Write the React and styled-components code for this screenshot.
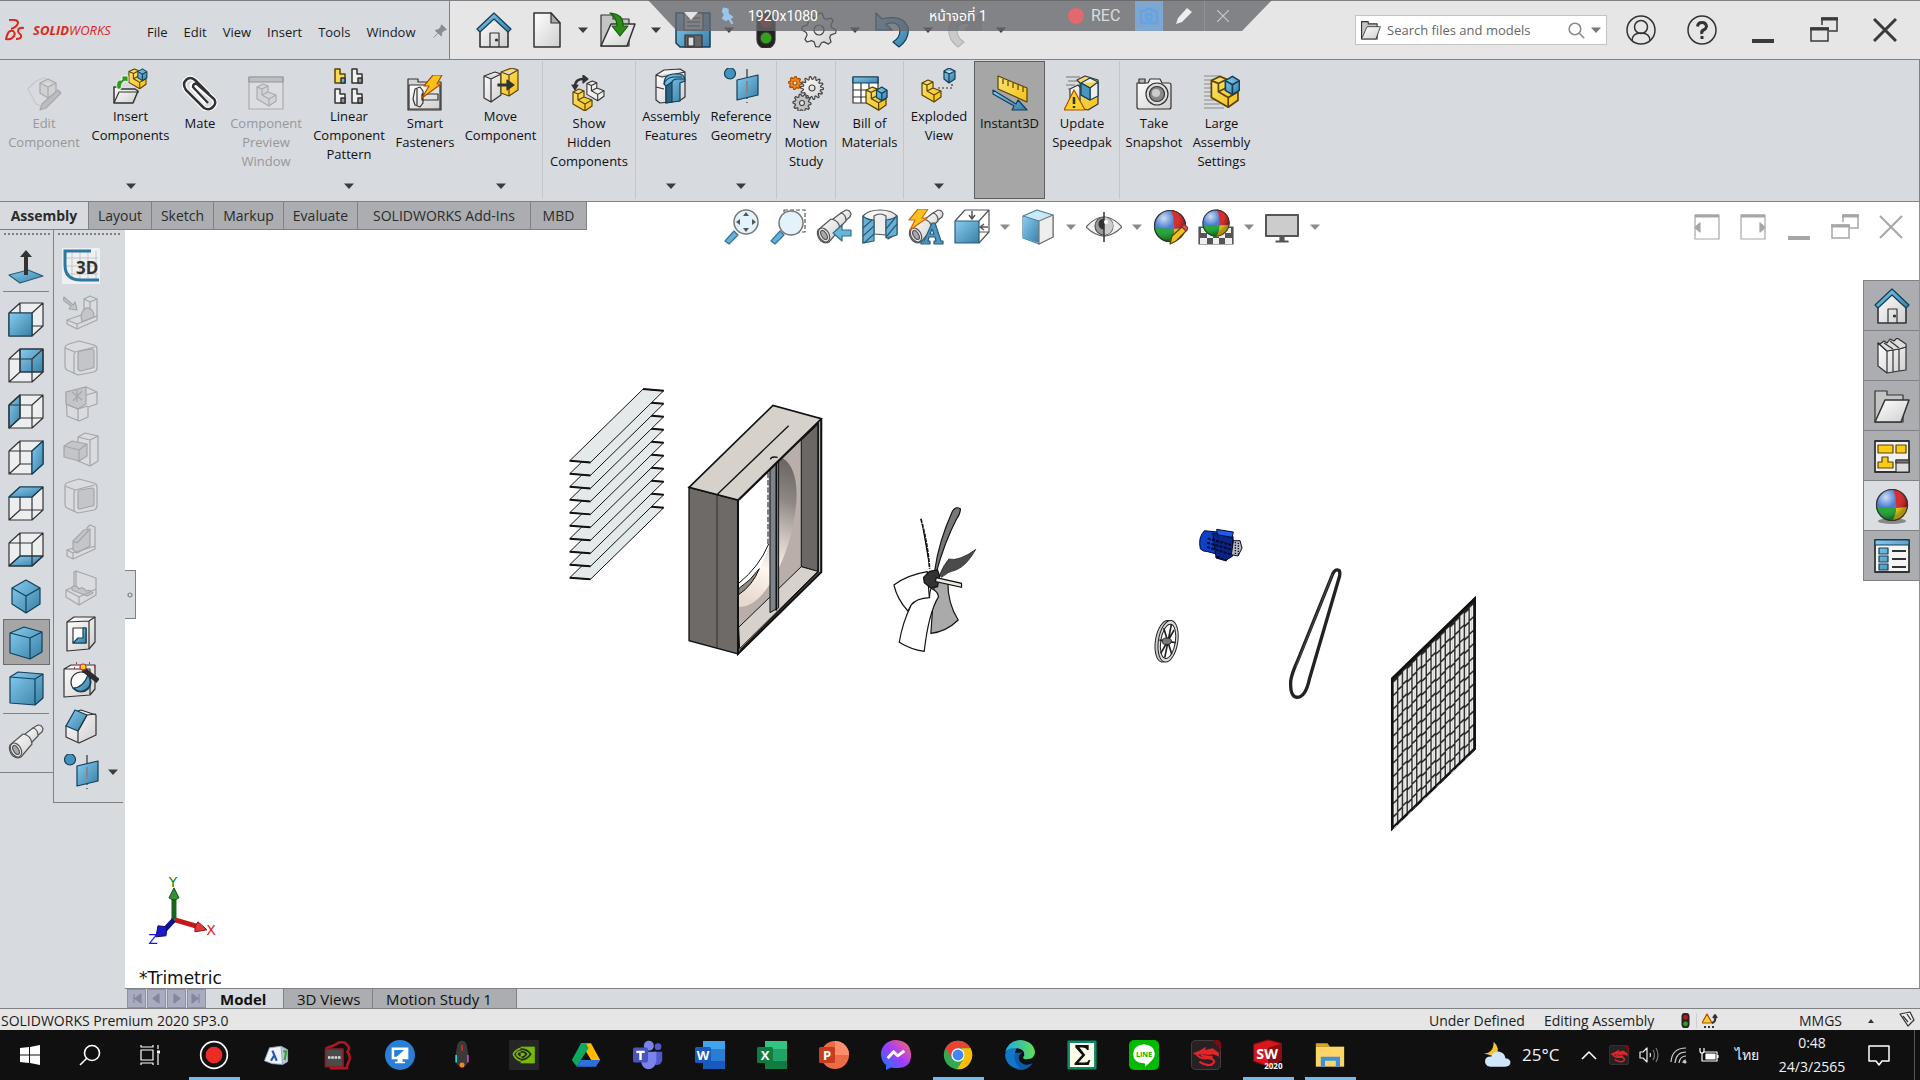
import React from 'react'
import styled, { createGlobalStyle, css } from 'styled-components'

const colors = {
    panel: '#d7dadf',
    bar: '#e6e6e6',
    tab: '#abadb0',
    line: '#808184',
    text: '#1b1b1b',
    taskbar: '#101010',
    accent: '#76b9ed',
}

const GlobalStyle = createGlobalStyle`
    * { box-sizing: border-box; }
    body {
        margin: 0;
        background: #fff;
        color: ${colors.text};
        font-family: 'Open Sans', 'Noto Sans', sans-serif;
        font-size: 13px;
    }
    button, input {
        font: inherit;
        color: inherit;
        border: 0;
        padding: 0;
        background: none;
    }
    button { cursor: pointer; }
    svg { display: block; flex: none; }
`

const Page = styled.div`
    position: relative;
    display: flex;
    flex-direction: column;
    min-height: 100vh;
`
const TitleBar = styled.header`
    display: flex;
    height: 60px;
    background: ${colors.bar};
    border-top: 1px solid ${colors.line};
    border-bottom: 1px solid ${colors.line};
`
const MenuArea = styled.div`
    display: flex;
    align-items: center;
    width: 450px;
    padding-left: 5px;
    background: ${colors.panel};
    border-right: 1px solid ${colors.line};
`
const Logo = styled.div`
    display: flex;
    align-items: center;
    gap: 8px;
    width: 142px;
    color: #da291c;
    font-style: italic;
    line-height: 20px;
`
const MenuNav = styled.nav`
    display: flex;
    align-items: center;
    gap: 16px;
    padding-top: 4px;
`
const QuickAccess = styled.div`
    display: flex;
    padding-left: 17px;
`
const Slot = styled.button`
    display: flex;
    align-items: center;
    justify-content: center;
    width: ${p => p.$w}px;
    height: ${p => p.$h || 58}px;
    ${p => p.$active && css`
        background: #a6a6a6;
        border: 1px solid #6d6d6d;
    `}
`
const SearchBox = styled.label`
    display: flex;
    align-items: center;
    gap: 6px;
    width: 252px;
    height: 30px;
    margin: 14px 19px 0 auto;
    padding: 0 5px;
    background: #fff;
    border: 1px solid #c3c3c3;
    color: #666;
`
const SearchInput = styled.input`
    flex: 1;
    min-width: 0;
    outline: none;
    &::placeholder { color: #666; opacity: 1; }
`
const WindowButtons = styled.div`
    display: flex;
    padding-right: 19px;
`
const RecorderBar = styled.div`
    position: absolute;
    top: 0;
    left: 0;
    right: 0;
    margin: auto;
    display: grid;
    grid-template-columns: 24px 40px 152px 116px 72px 47px 28px 42px 36px;
    align-items: center;
    width: 624px;
    height: 31px;
    padding-left: 36px;
    background: rgba(101, 103, 108, 0.78);
    border-top: 1px solid #6b6b6e;
    clip-path: polygon(0 0, 100% 0, calc(100% - 30px) 100%, 29px 100%);
    color: #fff;
    font-family: Roboto, 'Noto Sans Thai', sans-serif;
    font-size: 14px;
    line-height: 20px;
`
const Centered = styled.span`
    display: flex;
    justify-content: center;
`
const RecDot = styled.span`
    display: flex;
    justify-content: flex-end;
    padding-right: 3px;
`
const RecButton = styled.button`
    text-align: left;
    padding-left: 3px;
    color: #dcdcdc;
    font-size: 16px;
`
const RecTool = styled.button`
    display: flex;
    align-items: center;
    justify-content: center;
    height: 30px;
    background: ${p => p.$on ? '#7ea6cf' : 'none'};
    border-right: ${p => p.$sep ? '1px solid #8f9195' : '0'};
`

const Ribbon = styled.div`
    display: flex;
    height: 142px;
    padding: 1px 0 2px 2px;
    background: ${colors.panel};
    border-right: 1px solid ${colors.line};
    border-bottom: 1px solid ${colors.line};
`
const RibbonItem = styled.button`
    display: flex;
    flex-direction: column;
    align-items: center;
    width: ${p => p.$w}px;
    padding-top: ${p => p.$menu ? 7 : 14}px;
    border-right: ${p => p.$sep ? '1px solid #c3c6ca' : '0'};
    color: ${p => p.disabled ? '#96989b' : '#111'};
    line-height: 19px;
    ${p => p.$active && css`
        padding-top: 13px;
        background: #a6a6a6;
        border: 1px solid #5f5f5f;
    `}
`
const RibbonLabel = styled.span`
    margin-top: 3px;
    white-space: pre-line;
    text-align: center;
`
const RibbonArrow = styled.span`
    margin-top: auto;
    padding-bottom: 10px;
`

const Body = styled.div`
    position: relative;
    display: flex;
    flex: 1;
`
const Tabs = styled.div`
    position: absolute;
    top: 0;
    left: 0;
    z-index: 1;
    display: flex;
    height: 28px;
`
const Tab = styled.button`
    width: ${p => p.$w}px;
    background: ${p => p.$active ? colors.panel : colors.tab};
    border-right: 1px solid ${colors.line};
    border-bottom: 1px solid ${colors.line};
    color: #2b2b2b;
    font-size: 14px;
    font-weight: ${p => p.$active ? 700 : 400};
    line-height: 18px;
`
const SheetTab = styled(Tab)`
    padding-left: 13px;
    border-bottom: 0;
    color: #111;
    font-size: 15px;
    text-align: left;
`
const Side = styled.aside`
    display: flex;
    align-items: flex-start;
    width: 125px;
    padding-top: 28px;
    background: ${colors.panel};
`
const ToolColumn = styled.div`
    display: flex;
    flex-direction: column;
    align-items: center;
    width: ${p => p.$wide ? 70 : 54}px;
    height: ${p => p.$wide ? 573 : 543}px;
    padding-right: 2px;
    border-bottom: 1px solid ${colors.line};
    ${p => p.$wide && css`
        margin-left: -1px;
        padding-right: 16px;
        border-left: 1px solid ${colors.line};
    `}
`
const Grip = styled.div`
    align-self: stretch;
    height: 13px;
    margin: 0 3px;
    margin-right: ${p => p.$wide ? -15 : 1}px;
    background: radial-gradient(circle, #808184 1px, transparent 1px) 0 2px / 4px 4px repeat-x;
`
const ToolRow = styled.div`
    display: flex;
    align-items: center;
    position: relative;
`
const RowArrow = styled.button`
    position: absolute;
    left: 46px;
    padding: 4px;
`
const Rule = styled.hr`
    width: 46px;
    height: 1px;
    flex: none;
    margin: 2px 0 5px;
    border: 0;
    background: ${colors.line};
`
const Viewport = styled.main`
    position: relative;
    display: flex;
    flex-direction: column;
    flex: 1;
    min-width: 0;
`
const Canvas = styled.div`
    position: relative;
    flex: 1;
    min-height: 600px;
    border-right: 1px solid #8d9096;
    overflow: hidden;
`
const Drawing = styled.svg`
    position: absolute;
    width: 100%;
    height: 100%;
`
const ViewBar = styled.div`
    position: absolute;
    top: 2px;
    left: 0;
    right: 0;
    display: flex;
    justify-content: center;
`
const DocButtons = styled.div`
    position: absolute;
    top: 2px;
    right: 5px;
    display: flex;
`
const TaskPane = styled.div`
    position: absolute;
    top: 78px;
    right: -1px;
    border: 1px solid ${colors.line};
    background: ${colors.line};
    display: grid;
    gap: 1px;
`
const PaneButton = styled.button`
    display: flex;
    align-items: center;
    justify-content: center;
    width: 55px;
    height: 49px;
    background: ${p => p.$active ? '#dadde2' : colors.tab};
`
const Handle = styled.button`
    position: absolute;
    left: 0;
    top: 368px;
    display: flex;
    align-items: center;
    justify-content: center;
    width: 11px;
    height: 49px;
    background: ${colors.panel};
    border: 1px solid ${colors.line};
    border-left: 0;
`
const ViewName = styled.div`
    position: absolute;
    left: 14px;
    bottom: 0;
    font-family: 'DejaVu Sans', sans-serif;
    font-size: 17px;
    line-height: 20px;
    color: #111;
`
const BottomTabs = styled.div`
    display: flex;
    height: 20px;
    background: ${colors.panel};
    border-top: 1px solid ${colors.line};
`
const Pager = styled.div`
    display: flex;
    gap: 1px;
    width: 82px;
    padding-left: 2px;
`
const PagerButton = styled.button`
    display: flex;
    align-items: center;
    justify-content: center;
    width: 19px;
    background: #a9abc0;
    border: 1px solid #8f91a6;
`
const StatusBar = styled.footer`
    display: flex;
    align-items: center;
    height: 22px;
    padding: 2px 4px 0 1px;
    background: ${colors.bar};
    border-top: 1px solid ${colors.line};
    font-size: 14px;
    line-height: 19px;
`
const StatusText = styled.span`
    width: ${p => p.$w}px;
    margin-left: ${p => p.$push ? 'auto' : 0};
`
const StatusIcon = styled.span`
    width: ${p => p.$w}px;
    display: flex;
    justify-content: ${p => p.$start ? 'flex-start' : 'center'};
    padding-left: ${p => p.$start ? 5 : 0}px;
    border-right: ${p => p.$sep ? '1px solid #cfcfcf' : '0'};
`

const TaskBar = styled.footer`
    display: flex;
    height: 50px;
    background: ${colors.taskbar};
    color: #f2f2f2;
`
const SystemButtons = styled.div`
    display: flex;
    margin-right: 3px;
`
const TaskButton = styled.button`
    display: flex;
    align-items: center;
    justify-content: center;
    width: ${p => p.$w || 62}px;
    height: 50px;
    background: linear-gradient(${colors.accent}, ${colors.accent}) bottom / ${p => p.$open || 0}px 3px no-repeat;
`
const Tray = styled.div`
    display: flex;
    align-items: center;
    margin-left: auto;
    padding-right: 10px;
    border-right: 1px solid #555;
    margin-right: 5px;
`
const TrayItem = styled.button`
    display: flex;
    align-items: center;
    justify-content: center;
    width: ${p => p.$w}px;
    height: 50px;
    font-size: 14px;
    line-height: 24px;
    white-space: pre-line;
    text-align: center;
`
const Temperature = styled(TrayItem)`
    justify-content: flex-start;
    padding-left: 8px;
    font-size: 17px;
`

/* ---------- icons ---------- */

const Svg = ({ size = 36, box = 36, w, h, children, ...rest }) =>
    <svg width={w || size} height={h || size} viewBox={`0 0 ${w || box} ${h || box}`} fill="none"
        stroke="#333" strokeWidth="1.2" strokeLinejoin="round" aria-hidden="true" {...rest}>{children}</svg>

const Arrow = ({ color = '#3a3c40' }) =>
    <svg width="10" height="6" viewBox="0 0 10 6" fill={color}><path d="M0 0.5h10L5 6z" /></svg>

const Defs = () =>
    <Svg w={1} h={1} style={{ position: 'absolute' }}>
        <defs>
            <linearGradient id="blue" x1="0" y1="0" x2="1" y2="1"><stop stopColor="#86cdf0" /><stop offset="1" stopColor="#3a7ea5" /></linearGradient>
            <linearGradient id="white" x1="0" y1="0" x2="1" y2="1"><stop stopColor="#fff" /><stop offset="1" stopColor="#cfcfcf" /></linearGradient>
            <linearGradient id="gold" x1="0" y1="0" x2="1" y2="1"><stop stopColor="#f9e27a" /><stop offset="1" stopColor="#f5c211" /></linearGradient>
            <linearGradient id="duct" x1="0.6" y1="0" x2="0.45" y2="1">
                <stop stopColor="#6b6764" /><stop offset=".25" stopColor="#8e8884" /><stop offset=".5" stopColor="#cfc5be" /><stop offset=".75" stopColor="#fff8f0" /><stop offset="1" stopColor="#e6dad0" />
            </linearGradient>
            <linearGradient id="msgr" x1="0" y1="1" x2="1" y2="0"><stop stopColor="#0a7cff" /><stop offset=".5" stopColor="#a03bff" /><stop offset="1" stopColor="#ff6a62" /></linearGradient>
            <linearGradient id="edge" x1="0" y1="0" x2="1" y2="0"><stop stopColor="#1ea7e8" /><stop offset="1" stopColor="#63e04f" /></linearGradient>
            <radialGradient id="shine" cx=".3" cy=".25" r=".7"><stop stopColor="#fff" stopOpacity=".75" /><stop offset=".5" stopColor="#fff" stopOpacity=".05" /><stop offset="1" stopColor="#000" stopOpacity=".3" /></radialGradient>
        </defs>
    </Svg>

const Part = ({ at = '0 0', s = 1, fill = 'url(#gold)', line = '#5c4300', cube }) =>
    <g transform={`translate(${at}) scale(${s})`} stroke={line} fill={fill}>
        <path d="M1 4 7 1l5 2v6l8 3v6l-7 5-12-7z" />
        <path fill="none" d="M1 4l5 2 6-3M6 6v6l7 4 7-4M13 16v7M6 12l6-3" />
        {cube && <g fill="url(#blue)" stroke="#123f5a"><path d="M11 4l5-3 5 3v7l-5 3-5-3z" /><path d="M11 4l5 3 5-3M16 7v7" /></g>}
    </g>

const Ball = ({ r = 16, cx = 18, cy = 17 }) =>
    <g stroke="none" transform={`translate(${cx} ${cy}) scale(${r / 16})`}>
        <circle r="16" fill="#3f74cf" />
        <path d="M1-16Q5-6 4 3L16 2A16 16 0 0 0 1-16z" fill="#d81e1e" />
        <path d="M4 3 16 2A16 16 0 0 1 0 16Q4 9 4 3z" fill="#f0cf13" />
        <path d="M-16 2 4 3Q4 10 0 16A16 16 0 0 1-16 2z" fill="#17a32a" />
        <circle r="15.5" fill="url(#shine)" stroke="#333" />
    </g>

const Barrel = () =>
    <g fill="url(#white)" stroke="#555">
        <path d="M25 4l5-3q4 0 5 4l-1 3-5 4z" />
        <path d="M17 10l8-6q5 1 5 8l-7 7z" />
        <path d="M2 21 15 10q8 1 9 10L13 33q-4 2-8-1-5-5-3-11z" />
        <ellipse cx="8" cy="26" rx="5" ry="7.500" transform="rotate(-30 8 26)" fill="#e6e6e6" />
        <ellipse cx="8" cy="26" rx="2.500" ry="5" transform="rotate(-30 8 26)" fill="#aaa" />
    </g>

const House = () =>
    <Svg><path fill="url(#white)" strokeWidth="1.600" d="M4 15v20h28V15L18 2z" /><path fill="url(#blue)" stroke="#123f5a" d="M18 1 1 17l3 3L18 7l14 13 3-3z" /><path d="M14 35V21h9v14" /><circle cx="20.500" cy="28" r="1" fill="#333" /></Svg>
const NewDoc = () => <Svg><path fill="url(#white)" strokeWidth="1.500" d="M5 1h17l9 10v24H5z" /><path fill="#aaa" d="M22 1v10h9z" /></Svg>
const Folder = () => <g><path fill="#c4c4c4" d="M1 34V3h12v4h16v27z" /><path fill="url(#white)" strokeWidth="1.500" d="M1 34 11 12h24l-8 22z" /></g>
const OpenDoc = () => <Svg w={40}><Folder /><path fill="#2f8a1c" stroke="#175c0b" d="M10 1q14 1 13 13h5l-8 10-8-10h5Q17 6 10 1z" /></Svg>
const Save = () => <Svg><path fill="url(#blue)" stroke="#123f5a" strokeWidth="1.500" d="M1 1h34v34H5l-4-4z" /><path fill="#ddd" d="M9 1h19v17H9z" /><path d="M12 6h13M12 10h13M12 14h13" /><path fill="#666" d="M10 23h17v12H10z" /><path fill="#ddd" d="M13 25h6v9h-6z" /></Svg>
const Traffic = ({ size = 36 }) => <Svg size={size}><rect x="9" y="0" width="18" height="36" rx="8" fill="#222" /><circle cx="18" cy="10" r="6" fill="#c81414" /><circle cx="18" cy="26" r="6" fill="#34a01e" /></Svg>

const gearPath = (n, ro, ri) => {
    const pts = []
    for (let i = 0; i < n * 4; i++) {
        const a = (i / (n * 4)) * Math.PI * 2
        const r = i % 4 < 2 ? ro : ri
        pts.push(`${(Math.cos(a) * r).toFixed(1)},${(Math.sin(a) * r).toFixed(1)}`)
    }
    return pts.join(' ')
}
const Gear = ({ x, y, n = 8, r = 16, fill = 'url(#white)', line = '#444', hole = 5 }) =>
    <g transform={`translate(${x} ${y})`} fill={fill} stroke={line}><polygon points={gearPath(n, r, r * 0.76)} /><circle r={hole} fill="#e6e6e6" /></g>

const Undo = ({ dim }) =>
    <Svg transform={dim ? 'scale(-1 1)' : undefined}><path fill={dim ? '#cacaca' : 'url(#blue)'} stroke={dim ? '#b4b4b4' : '#123f5a'} d="M2 1v17h16l-6-6q12-4 14 6 0 8-7 12l6 5q11-8 9-20Q29 2 8 7z" /></Svg>

const Paperclip = () => <Svg><path d="M27 19 13 5Q8 1 4 5t0 10l18 18q5 3 9-1t0-9L13 9q-3-1-3 3l15 16" stroke="#fff" strokeWidth="5" /><path d="M27 19 13 5Q8 1 4 5t0 10l18 18q5 3 9-1t1-8L15 9q-4-1-4 3l15 16" stroke="#333" strokeWidth="2.500" /></Svg>
const EditComp = () => <Svg opacity=".6"><path stroke="#bbb" d="M2 14l8-8 8-3 8 5v14l-8 10-8-3z" /><path fill="#ccc" stroke="#888" d="M14 8l8-4 8 4v10l-8 5-8-5zM14 8l8 4 8-4M22 12v11" /><path fill="#aaa" stroke="#888" d="M32 15l3 3-15 15-6 2 2-6z" /></Svg>
const InsertComp = () => <Svg><Part at="15 0" s={0.9} cube /><path fill="url(#white)" strokeWidth="1.500" d="M1 35V19h6l1 2h14l3 2-5 12z" /><path d="M1 35l5-11h20" /><path fill="#2f9a1c" stroke="#fff" strokeWidth=".8" d="M4 21q-2-10 5-9V8h6v6l-3-1q-4 1-4 8z" /></Svg>
const Preview = () => <Svg opacity=".4"><path fill="#e2e2e2" stroke="#666" d="M1 2h34v32H1z" /><path fill="#999" d="M1 2h34v5H1z" /><Part at="8 8" fill="#ccc" line="#666" /></Svg>
const Linear = () => <Svg>{[[3, 0, 1], [20, 0], [3, 20], [20, 20]].map(([x, y, on]) => <g key={x + '-' + y} transform={`translate(${x} ${y})`} strokeWidth="1.500"><path fill={on ? '#f7da52' : '#f2f2f2'} stroke={on ? '#5c4300' : '#333'} d="M1 1h5v5h5v9H1z" /><path fill={on ? '#5db6e2' : '#999'} d="M7 10h4v5H7z" /></g>)}</Svg>
const Smart = () => <Svg><path fill="#d5d5d5" d="M1 35V4h10v3h23v28z" /><path fill="url(#white)" d="M2 10h31v24H2z" /><path fill="url(#white)" d="M15 19h16v6H15zM8 14l5-2 3 4v12l-3 4-5-2-2-6z" /><path d="M10 14v16" /><path fill="#f7c21a" stroke="#b04c00" d="M26 0h9l-5 9h4L15 23l7-12h-5z" /></Svg>
const Move = () => <Svg><path fill="url(#white)" d="M1 8l11-4 6 2v21L8 34l-7-4zM1 8l7 3 10-5M8 11v23" /><path fill="url(#gold)" stroke="#5c4300" d="M18 4 29 0l6 2v20l-9 6-8-3zM18 4l8 3 9-5M26 7v21" /><path fill="#333" d="M15 16h9v-4l7 5-7 5v-4h-9z" /></Svg>
const ShowHidden = () => <Svg><Part at="15 5" s={0.9} fill="#eee" line="#333" /><Part at="1 13" /><path strokeWidth="2.500" d="M4 12Q4 3 14 4" /><path fill="#333" d="M12 0l5 4-5 4zM1 10h6l-3 5z" /></Svg>
const AsmFeatures = () => <Svg><path fill="url(#white)" d="M3 7 11 2l16-1 5 3v25l-6 4-19 2-4-3zM3 7l6 2 23-5M3 19l8 2" /><path fill="url(#blue)" stroke="#123f5a" d="M13 35V18l-2-2q0-9 9-10h7q5 1 5 7l-5 2v18z" /><path fill="#2c6485" stroke="#123f5a" d="M13 18l6-4v20l-6 1z" /><path stroke="#123f5a" d="M19 14q1-3 6-3h7M11 16q2-6 9-7h9" /></Svg>
const RefGeom = () => <Svg><circle cx="7" cy="5.500" r="5.500" fill="#4493bd" stroke="#123f5a" /><path strokeDasharray="8 3" d="M24 1v34" /><path fill="url(#blue)" stroke="#123f5a" d="M14 12l21-5v20l-21 5z" /><path stroke="#fff" strokeWidth="2" d="M24 13v12" /><path d="M24 13v12" /></Svg>
const Motion = () => <Svg><Gear x={7} y={8} n={8} r={6.5} hole={2} fill="#f08a1e" line="#b04c00" /><Gear x={24} y={13} n={14} r={11.5} hole={3} /><Gear x={14} y={28} n={10} r={9} hole={2.5} fill="#c2c2c2" /></Svg>
const Bom = () => <Svg><path fill="#fff" d="M1 2h25v26H1z" /><path fill="url(#blue)" stroke="#123f5a" d="M1 2h25v6H1z" /><path d="M1 15h25M1 22h25M9 8v20M17 8v20" /><Part at="13 11" s={1.05} cube /></Svg>
const Exploded = () => <Svg><Part at="0 11" /><path fill="url(#blue)" stroke="#123f5a" d="M23 3l5-3 6 3v8l-6 4-5-4zM23 3l5 3 6-3M28 6v9" /><path strokeDasharray="2 2" d="M17 20h14v-6" /></Svg>
const Instant3D = () => <Svg><path fill="url(#gold)" stroke="#5c4300" d="M6 1l29 12v14L6 14z" /><path stroke="#5c4300" d="M11 4v5M16 6v5M21 8v5M26 10v5M31 12v5" /><path fill="url(#blue)" stroke="#123f5a" d="M1 15l23 14 2-4 9 10H20l2-4L1 19z" /></Svg>
const Speedpak = () => <Svg><path stroke="#777" d="M2 2h14M4 6h10M2 10h9M4 14h6" /><path fill="url(#white)" d="M6 14l8-4 3 3v20H6z" /><path fill="url(#gold)" d="M13 5l8-4 13 4v24l-10 6-8-2V8z" /><path fill="#eee" stroke="#123f5a" d="M17 8l9-5 8 4v14l-8 4-9-5zM17 8l9 5 8-6M26 13v12" /><path fill="#4a94bd" stroke="#123f5a" d="M17 8l9 5v12l-9-5z" /><path fill="#fbd22b" stroke="#b04c00" d="M10 15l11 20H0z" /><path strokeWidth="2.500" d="M10 22v7M10 31v2" /></Svg>
const Camera = () => <Svg><path fill="url(#white)" d="M1 8h11l2-4h10l2 4h7q2 0 2 2v22q0 2-2 2H3q-2 0-2-2z" /><path fill="#bbb" d="M3 4h6v4H3z" /><circle cx="21" cy="19" r="11" fill="#ddd" /><circle cx="21" cy="19" r="7.500" fill="#888" /><circle cx="20" cy="18" r="4" fill="#ccc" stroke="none" /></Svg>
const Large = () => <Svg><path stroke="#888" d="M0 1h16M0 5h12M0 9h9M0 13h9M0 17h9M0 21h9M0 25h12M0 29h16M0 33h20" /><Part at="6 0" s={1.4} cube /></Svg>

const Lens = ({ x, y }) => <g><circle cx={x} cy={y} r="12" fill="#e4f3fb" stroke="#777" strokeWidth="1.500" /><path fill="#62b2da" stroke="#3b728f" d="M10 22l4 4-9 9-4-3z" /></g>
const ZoomFit = () => <Svg><Lens x={22} y={13} /><path fill="#555" stroke="none" d="M22 3l3 4h-6zM22 23l3-4h-6zM12 13l4-3v6zM32 13l-4-3v6z" /></Svg>
const ZoomArea = () => <Svg><path stroke="#555" strokeDasharray="4 2" d="M14 1h21v22H14z" /><Lens x={21} y={14} /></Svg>
const PrevView = () => <Svg><Barrel /><path fill="#6ab4da" stroke="#2c6c8f" d="M35 21v6h-9v5l-9-8 9-8v5z" /></Svg>
const Section = () => <Svg><path fill="url(#white)" stroke="#555" d="M1 7Q6 1 18 1q12 0 17 6v18l-9 5V12q-8 4-16 0v20l-9 2z" /><path fill="#eee" stroke="#555" d="M12 7q6-4 12 0v19l-12-1z" /><path fill="#6bb0d2" stroke="#285c7a" d="M1 7q4 4 11 4v21l-11 2zM24 11q8-1 11-4v19l-11 3z" /><path stroke="#285c7a" d="M1 19l9-8M1 27l11-10M2 34l10-9M24 20l9-11M24 28l11-13" /></Svg>
const Annot = () => <Svg><Barrel /><path fill="#f7c21a" stroke="#d0661a" d="M10 0h10l-6 9h5L2 21l5-10H1z" /><path fill="#4c98c2" stroke="#285c7a" d="M13 35v-3h3l8-18h3l6 18h2v3H26v-3h2l-1-4h-6l-1 4h2v3zM22 25h4l-2-5z" /></Svg>
const Orient = () => <Svg><path stroke="#555" d="M1 12 11 1h24v22L25 34M35 1 25 12M25 23h10" /><path fill="url(#blue)" stroke="#285c7a" strokeWidth="1.200" d="M1 12h24v22H1z" /><path strokeWidth="1.500" stroke="#555" d="M18 2v7M15 6l3 4 3-4M34 18h-7M30 15l-4 3 4 3" /></Svg>
const Display = () => <Svg><path fill="#cbe8f5" stroke="#4b7c97" d="M3 7 17 1l16 5v22l-14 7-16-6z" /><path fill="url(#blue)" stroke="none" d="M3 8l16 4v22L3 29z" /><path fill="#eee" stroke="#777" d="M19 12l14-6v22l-14 7z" /><path stroke="#4b7c97" d="M3 7l16 5" /></Svg>
const Eye = () => <Svg><path fill="#f2f2f2" stroke="#666" d="M0 18Q18-2 36 18 18 36 0 18z" /><circle cx="18" cy="17" r="9" fill="#999" stroke="#555" /><circle cx="18" cy="15" r="5" fill="#333" /><path fill="#ccc" stroke="none" d="M18 8a9 9 0 0 1 0 18z" /><path strokeWidth="1.500" d="M18 3v30" /><circle cx="20" cy="13" r="2" fill="#fff" stroke="none" /></Svg>
const Appear = () => <Svg><Ball /><path fill="#f2c11f" stroke="#5c4300" d="M20 27 31 17l4 4-11 11-6 3z" /><path fill="#d55" stroke="#833" d="M30 18l2-3 4 4-2 3z" /></Svg>
const Scene = () => <Svg><path fill="#555" stroke="#555" d="M1 18h34v17H1z" /><path fill="#eee" stroke="none" d="M3 19h6v5H3zM27 19h6v5h-6zM9 24h6v5H9zM21 24h6v5h-6zM2 29h7v6H2zM15 29h6v6h-6zM27 29h7v6h-7z" /><Ball r={13.5} cy={14} /></Svg>
const Monitor = () => <Svg><path fill="#ccc" stroke="#555" strokeWidth="2" d="M2 6h32v21H2z" /><path fill="#555" stroke="#555" d="M16 28h4v4h4v1H12v-1h4z" /></Svg>

const cubeFaces = {
    front: '1,11 24,11 24,34 1,34',
    back: '12,1 35,1 35,24 12,24',
    left: '1,11 12,1 12,24 1,34',
    right: '24,11 35,1 35,24 24,34',
    top: '1,11 12,1 35,1 24,11',
    bottom: '1,34 12,24 35,24 24,34',
}
const Wire = ({ face }) => {
    const behind = face === 'back' || face === 'bottom' || face === 'left'
    const side = <polygon points={cubeFaces[face]} fill="url(#blue)" stroke="#123f5a" />
    return (
        <Svg>
            <path fill="#eceef0" stroke="none" d="M1 11 12 1h23v23L24 34H1z" />
            {behind && side}
            <path d="M1 11h23v23H1zM12 1h23v23H12zM1 11 12 1M24 11 35 1M24 34l11-10M1 34l11-10" />
            {!behind && side}
        </Svg>
    )
}
const Solid = ({ d, edges }) => <Svg fill="url(#blue)" stroke="#123f5a"><path d={d} /><path fill="none" d={edges} /></Svg>
const NormalTo = () => <Svg><path fill="url(#blue)" stroke="#285c7a" d="M1 27l19-5 15 6-23 7z" /><path fill="#333" stroke="none" d="M18 2l6 7h-4v18h-4V9h-4z" /></Svg>

const Faded = ({ d, inner, lines }) => <Svg fill="#d9dbde" stroke="#a4a6aa"><path d={d} /><path fill="#c3c5c9" d={inner} /><path fill="none" d={lines} /></Svg>
const Sketch3D = () =>
    <svg width="38" height="36" viewBox="0 0 38 36"><path fill="#eef0f2" d="M0 0h38v36H0z" /><path stroke="#c4c7ca" d="M10 3v28M18 3v28M26 3v28M34 3v28M3 10h33M3 18h33M3 26h33" /><path fill="none" stroke="#2d77a3" strokeWidth="3" d="M29 3H3v14q0 15 16 15h18" /><text x="14" y="26" fontFamily="Open Sans" fontSize="17" fontWeight="700" fill="#333">3D</text></svg>
const Hollow = () => <Svg><path fill="url(#white)" d="M4 6 11 1h21v25l-6 7-22 2z" /><path d="M4 6l22-1 6-4M26 5v28" /><path fill="#fff" d="M10 12h13v15H10z" /><path fill="url(#blue)" stroke="#123f5a" d="M10 27l5-5h5V12h3v15z" /></Svg>
const Wizard = () => <Svg><path fill="url(#white)" d="M1 7 8 3h24v24l-5 6-26 2zM1 7h26v26" /><circle cx="18" cy="20" r="10" fill="#fff" /><path fill="url(#blue)" stroke="#123f5a" d="M10 26q10 0 15-13 4 7 1 12-7 8-16 1z" /><path stroke="#2b2b2b" strokeWidth="5" d="M20 7l15 12" /><circle cx="20" cy="5" r="3" fill="#f9d423" stroke="#c33" /><path fill="#f60" stroke="#c33" d="M13 1h1M26 1h1M11 6h1M31 5h1" strokeWidth="2" /></Svg>
const Chamfer = () => <Svg><path fill="url(#white)" d="M3 18 12 4l6-2 15 5v20l-17 8-13-6z" /><path fill="url(#blue)" stroke="#123f5a" d="M3 18 12 2l12 5-9 16z" /><path d="M15 23l9-16 9-1M15 23v11" /></Svg>

const Books = () => <Svg><path fill="url(#white)" d="M4 5l9 8v22L4 28zM13 13l6-1v22l-6 1zM19 12l6-1v22l-6 1zM25 11l7-2v23l-7 1z" /><path fill="#ddd" d="M4 5l2 1 4-3 3 2 3-4 4 2 3-3 9 6v3l-7 2-12 2z" /><path d="M10 5l9 6M16 3l9 7" /></Svg>
const Palette = () => <Svg><path fill="#f2f2f2" strokeWidth="1.800" d="M1 3h34v31H1z" /><path fill="#fbcb17" stroke="#5c4300" d="M4 7h15v8H4zM22 7h10v8H22zM4 30v-6h4v-5h6v5h5v6z" /><path fill="#ddd" d="M22 22h13v12H22z" /><path fill="#777" d="M22 22h13v3H22z" /></Svg>
const Props = () => <Svg><path fill="#f5f5f5" strokeWidth="1.800" d="M1 2h34v32H1z" /><path fill="url(#blue)" stroke="#123f5a" d="M1 2h34v5H1zM5 10h9v6H5zM5 18h9v6H5zM5 26h9v6H5z" /><path strokeWidth="2" d="M18 13h14M18 21h14M18 29h14" /></Svg>

const Restore = ({ color, bold = 1.5 }) => <Svg w={30} h={30} stroke={color} strokeWidth={bold} strokeLinejoin="miter"><path d="M13 10V3h15v13h-8" /><path strokeWidth="3" d="M12 4h17" /><path d="M2 13h17v13H2z" /><path strokeWidth="3" d="M1 14h19" /></Svg>
const Minimize = ({ color }) => <Svg w={24} h={30} stroke={color} strokeWidth="4"><path d="M1 26h22" /></Svg>
const Close = ({ color, bold = 3 }) => <Svg w={24} h={24} stroke={color} strokeWidth={bold}><path d="M1 1l22 22M23 1 1 23" /></Svg>
const DockIcon = ({ right }) => <Svg w={26} h={28} stroke="#a6a6a6"><path d="M1 2h24v24H1z" /><path strokeWidth="3" d="M1 3h24" /><path fill="#a6a6a6" d={right ? 'M20 10v9l5-4.500z' : 'M6 10v9l-5-4.500z'} /></Svg>

/* taskbar */
const Office = ({ letter, dark, mid, light, round }) =>
    <svg width="30" height="30" viewBox="0 0 30 30">
        {round ? <g><circle cx="16" cy="15" r="14" fill={mid} /><path fill={light} d="M16 1a14 14 0 0 1 14 14H16z" /></g>
            : <g><path fill={mid} d="M8 1h22v28H8z" /><path fill={light} d="M8 1h22v8H8z" /><path fill={dark} d="M8 21h22v8H8z" /></g>}
        <rect y="7" width="16" height="16" rx="1.500" fill={dark} />
        <text x="8" y="20" textAnchor="middle" fontFamily="Open Sans" fontSize="13" fontWeight="700" fill="#fff">{letter}</text>
    </svg>
const Start = () => <Svg size={20} box={20} fill="#fff" stroke="none"><path d="M0 3l9-1v7.500H0zM10 2l10-2v9.500H10zM0 10.500h9V18l-9-1zM10 10.500h10V20l-10-2z" /></Svg>
const Search = ({ color = '#fff', size = 22, flip }) => <Svg size={size} box={22} stroke={color} strokeWidth={flip ? 2 : 1.6} transform={flip ? 'scale(-1 1)' : undefined}><circle cx="13" cy="9" r="7.500" /><path d="M8 14l-7 7" /></Svg>
const TaskView = () => <Svg size={20} box={20} stroke="#fff"><path d="M1 5h12v10H1zM1 0v2h12V0M1 20v-2h12v2M18 0v4M18 9v11" /><path strokeWidth="3" d="M17 7h3" /></Svg>
const Recorder = () => <Svg size={30} stroke="none"><circle cx="18" cy="18" r="17" fill="#fff" /><circle cx="18" cy="18" r="15" fill="#111" /><circle cx="18" cy="18" r="10" fill="#ee2a24" /></Svg>
const Dice = () => <Svg size={26} stroke="#8fa3b8"><path fill="#eef3f8" d="M2 26 9 8l16-2 9 5v16l-7 4-14-1z" /><path fill="#bccbd9" d="M25 6l9 5v16l-7 4z" /><path stroke="#2953b8" strokeWidth="3" d="M13 12l6 14M16 18l-5 8" /><path stroke="#37a03b" strokeWidth="3" d="M28 13h4l-2 12" /></Svg>
const CpuZ = () => <Svg size={30}><path fill="none" stroke="#b21622" strokeWidth="3" d="M3 10Q14 7 19 3q7-1 9 2 6 5 1 9 5 6 2 12t-2 8H8" /><path fill="#4b4b4b" stroke="#8a1f24" strokeWidth="2" d="M3 11h21v21H3z" /><path stroke="#ddd" strokeWidth="3" strokeDasharray="3 1" d="M6 21h15" /></Svg>
const RemoteApp = () => <Svg size={30} stroke="none"><circle cx="18" cy="18" r="18" fill="#2a7fd4" /><path fill="#fff" d="M8 9h20v14H8zM15 23h6v3h3v2H12v-2h3z" /><path fill="#2a7fd4" d="M11 12h12l-9 8h-3z" /></Svg>
const Mouse = () => <Svg size={30} stroke="none"><path fill="#3a3a3a" d="M12 8q1-7 6-7t6 7l2 12q0 10-8 14-8-4-8-14z" /><path stroke="#e22" strokeWidth="2" d="M18 6v7" /><path stroke="#2ed1d8" strokeWidth="2" d="M11 18v9" /><path stroke="#d43bd8" strokeWidth="2" d="M25 18v9" /><circle cx="18" cy="30" r="3" fill="#f28a1e" /></Svg>
const Nvidia = () => <Svg size={30} stroke="none"><path fill="#262626" d="M0 0h36v36H0z" /><path fill="#76b900" d="M14 8h17v20H14z" /><path stroke="#76b900" strokeWidth="2" d="M5 17q4-6 9-7M5 17q4 8 10 8" /><path fill="none" stroke="#262626" strokeWidth="2" d="M14 11q8 0 12 6-4 6-12 7M14 14q5 0 7 3-3 4-7 4" /><path stroke="#76b900" strokeWidth="2" d="M9 17q2-4 5-3M9 17q2 4 6 4" /></Svg>
const Drive = () => <Svg size={30} stroke="none"><path fill="#ffba00" d="M12 4h12l11 20H24z" /><path fill="#0da960" d="M12 4h6l3 6L7 32 1 24z" /><path fill="#101010" d="M18 15l6 9H12z" /><path fill="#2d6fdd" d="M7 32l5-8h23l-5 8z" /></Svg>
const Teams = () => <Svg size={30} stroke="none"><circle cx="19" cy="7" r="6" fill="#7b83eb" /><circle cx="30" cy="8" r="4" fill="#5059c9" /><path fill="#5059c9" d="M25 14h10v11q-2 6-8 5z" /><path fill="#7b83eb" d="M10 14h18v12q-2 9-10 9-7-1-8-8z" /><rect y="9" width="18" height="18" rx="2" fill="#4b53bc" /><path fill="#fff" d="M4 13h10v2.500h-3.500V24h-3v-8.500H4z" /></Svg>
const Messenger = () => <Svg size={30} stroke="none"><path fill="url(#msgr)" d="M18 0C7 0 0 8 0 17q0 8 6 13v6l6-3q25 4 24-16Q35 1 18 0z" /><path stroke="#fff" strokeWidth="3.500" d="M8 22l7-8 5 5 8-6" /></Svg>
const Chrome = () => <Svg size={30} stroke="none"><circle cx="18" cy="18" r="17" fill="#34a853" /><path fill="#ea4335" d="M3 10a17 17 0 0 1 30 0H18l-7 12z" /><path fill="#fbbc05" d="M33 10a17 17 0 0 1-16 25l8-13q2-6-3-12z" /><circle cx="18" cy="18" r="8" fill="#fff" /><circle cx="18" cy="18" r="6.500" fill="#4285f4" /></Svg>
const Edge = () => <Svg size={30} stroke="none"><path fill="#0d5ca8" d="M1 16q2 19 19 20 9-1 13-8-8 4-14-1-6-7 2-12z" /><path fill="#1277c9" d="M0 18Q2 8 14 10q-7 13 4 24Q2 34 0 18z" /><path fill="url(#edge)" d="M0 15Q4 0 19 0q16 2 17 15-1 9-12 8-4-1-1-4 1-8-8-9Q4 9 0 15z" /></Svg>
const Sigma = () => <Svg size={30}><path fill="#fdfde8" stroke="#0c8a68" strokeWidth="3" d="M2 2h32v32H2z" /><path fill="#111" stroke="none" d="M10 6h16v6h-2q-1-3-5-3h-4l7 9-8 9h7q4 0 5-3h2l-2 6H9v-2l9-10-8-9z" /></Svg>
const Line = () => <Svg size={30} stroke="none"><rect width="36" height="36" rx="6" fill="#00b900" /><path fill="#fff" d="M18 5q13 1 13 12 0 6-12 15 1-4-1-4Q5 27 5 17 5 6 18 5z" /><text x="18" y="20" textAnchor="middle" fontFamily="Open Sans" fontSize="8.500" fontWeight="700" fill="#00b900">LINE</text></Svg>
const Dragon = ({ size = 30 }) => <Svg size={size} stroke="none"><rect x=".5" y=".5" width="35" height="35" rx="5" fill="#262223" stroke="#444" /><path fill="#7a0a12" d="M26 0h5q5 0 5 5v8z" /><path fill="#e4242b" d="M2 16l8-3 8-5-1 4 9-2 7 5 1 5-7-3-6 1-7-1-8 1z" /><path stroke="#e4242b" strokeWidth="2.500" d="M6 16q4 7 12 6t10 4q-2 5-10 4M12 18q6 3 14 2M10 26q8 6 16 3" /></Svg>
const SwApp = () => <Svg size={32}><path fill="#d8171c" stroke="#8c0c10" d="M2 6 18 1l15 4v19l-14 7-17-6z" /><path fill="#8c0c10" stroke="none" d="M18 10l15-5v19l-15 7z" /><text x="17" y="22" textAnchor="middle" fontFamily="Open Sans" fontSize="16" fontWeight="700" fill="#fff" stroke="none">SW</text><text x="24" y="34" textAnchor="middle" fontFamily="Open Sans" fontSize="9" fontWeight="700" fill="#fff" stroke="none">2020</text></Svg>
const Explorer = () => <Svg size={30} stroke="none"><path fill="#e0a21a" d="M1 4h14l3 4H1z" /><path fill="#fbd566" d="M1 8h34v24H1z" /><path fill="#3c91dd" d="M7 32V20h23v12h-5v-7H12v7z" /></Svg>
const Weather = () => <Svg size={30} stroke="none"><path fill="#fbc02d" d="M14 2q9 8 2 18L2 16Q14 16 14 2z" /><path fill="#cfe6fb" d="M10 32q-8-1-6-9 2-4 7-3 3-7 10-6 7 2 7 8 7 1 6 6-1 4-6 4z" /></Svg>

/* ---------- 3D model ---------- */

const Louver = () =>
    <g fill="#e4e9ea" stroke="#111" strokeWidth="3">
        {[9, 8, 7, 6, 5, 4, 3, 2, 1, 0].map(i =>
            <g key={i} transform={`translate(0 ${i * 39})`}>
                <path d="M310 57l62 5-220 215-62-5z" />
                <path strokeWidth="6" d="M310 57l62 5M90 272l62 5" />
            </g>
        )}
    </g>

const Housing = () =>
    <g stroke="#111" strokeWidth="3">
        <path fill="#b9aea9" d="M595 390 845 146v460L595 852z" />
        <path fill="url(#duct)" stroke="none" d="M725 262C765 280 780 350 766 430 750 560 670 720 597 710V640L691 500V290z" />
        <path fill="#fff" stroke="none" d="M597 395l90-88v225q-25 80-90 130z" />
        <path fill="none" d="M597 640q62-50 90-118" />
        <path fill="#8d8a80" d="M597 656q36-24 62-60-20 50-62 78z" />
        <path fill="#6b6764" d="M785 210l50-47v441l-50-14z" />
        <path fill="#d6d1cb" d="M597 772l188-182 50 14-235 232z" />
        <path fill="#7d848a" d="M691 285l26-22v450l-26 15z" />
        <path strokeWidth="5" d="M710 270v452" />
        <path strokeDasharray="16 6" d="M685 308v215" />
        <path fill="none" strokeWidth="4" d="M600 388 836 158v448L600 842" />
        <path fill="#6e6a67" strokeWidth="4" d="M448 352l147 38v462l-147-40z" />
        <path strokeWidth="2" d="M532 373v460" />
        <path fill="#d6d1cb" strokeWidth="5" d="M448 352 700 106l145 40-250 244z" />
        <path strokeWidth="4" d="M534 372l213-205" />
        <path fill="none" strokeWidth="6" d="M595 390v462l250-246V146" />
        <path fill="none" strokeWidth="4" d="M692 268q2-10 22-6" />
    </g>

const Fan = () =>
    <g stroke="#111" strokeWidth="3.500" transform="translate(1020 390)">
        <path strokeDasharray="12 3" strokeWidth="5" d="M124 56q22 80 26 150" />
        <path fill="#777" d="M165 215q12-90 54-182 10-16 24-6-2 18-12 30-36 70-60 158z" />
        <path fill="#4b4b4b" strokeWidth="2" d="M180 225q12-30 28-48 30 8 81-29-28 50-60 62-22 4-43 22z" />
        <path fill="#aaa" d="M154 400q46-5 82-40-32-50-31-115l-40-5z" />
        <path fill="#fff" d="M43 255q40-30 100-40l7 85-55 15-10 18q-32-35-42-78z" />
        <path fill="#fff" d="M95 315q15-20 55-22 0-20 5-28 20 10 22 25-30 50-43 164-40-5-75-27 10-60 36-112z" />
        <path fill="#333" d="M132 232l18-18 24-4 6 18-6 32-20 4-20-16z" />
        <path fill="#eee9dd" d="M170 233l76 17v12l-78-17z" />
    </g>

const Motor = () =>
    <g stroke="#05082c" strokeWidth="3">
        <path fill="#0b41c4" d="M225 92q-20 20-12 55 8 8 22 8l30 8 25 10 25-20-5-45-45-12z" />
        <path fill="#0a2585" d="M250 100l60 8v60l-22 14-28-8z" />
        <path fill="#1c5cf0" d="M262 88l50 8-4 16-44-8z" />
        <path strokeWidth="6" strokeDasharray="9 4" d="M235 115l70 20M233 128l70 20M233 141l70 22M262 170l30 12" />
        <path fill="#b8b8b8" d="M312 122h20l6 22-12 24-20-4z" />
        <path strokeDasharray="4 4" strokeWidth="4" d="M318 126v36M327 128v36" />
    </g>

const Pulley = () =>
    <g stroke="#222" strokeWidth="3">
        <ellipse cx="107" cy="424" rx="29" ry="63" transform="rotate(9 107 424)" fill="#ccc" />
        <ellipse cx="116" cy="424" rx="29" ry="63" transform="rotate(9 116 424)" fill="#ddd" />
        <ellipse cx="116" cy="424" rx="22" ry="52" transform="rotate(9 116 424)" fill="#fff" />
        <path strokeWidth="5" d="M90 420l48 8M126 373l-20 100M103 385l24 78M134 390l-40 70" />
        <ellipse cx="112" cy="424" rx="14" ry="10" fill="#777" />
    </g>

const Belt = () =>
    <g fill="none" strokeLinejoin="round">
        <path stroke="#222" strokeWidth="10" d="M610 222q8-18 20-10 4 8-2 26l-88 300q-12 55-38 54-20-2-18-48 2-20 20-60z" />
        <path stroke="#777" strokeWidth="1.500" d="M610 222 500 500" />
    </g>

const Grill = () => {
    const cells = []
    for (let c = 0; c < 17; c++) {
        for (let r = 0; r < 11; r++) {
            const x = 793 + c * 14.3
            const y = 541 - (x - 793) * 0.968 + r * 40.5 - (c % 3) * 3
            cells.push(<path key={`${c}-${r}`} d={`M${x} ${y + 7}l10-9v34l-10 9zm5-5v34`} />)
        }
    }
    return (
        <g>
            <path fill="#222" stroke="#111" strokeWidth="4" d="M787 535 1038 292v456L787 990z" />
            <g fill="#fafaf8" stroke="#8a8a86" strokeWidth="1">{cells}</g>
            <path fill="none" stroke="#111" strokeWidth="6" d="M789 537 1036 297v449L789 984z" />
        </g>
    )
}

const Triad = () =>
    <g fontFamily="DejaVu Sans" fontSize="14" textAnchor="middle">
        <path stroke="#1b641b" strokeWidth="5" d="M174 920v-24" />
        <path fill="#2f8f3a" stroke="#134d17" d="M174 888l5 10q-5 4-10 0z" />
        <path stroke="#c21a1a" strokeWidth="5" d="M175 920l24 7" />
        <path fill="#e03a3a" stroke="#8c1010" d="M207 930l-12 2q-1-6 3-10z" />
        <path stroke="#10108c" strokeWidth="5" d="M174 920l-12 13" />
        <path fill="#1a1ac8" stroke="#0a0a70" d="M156 937l2-11 9 1-1 9z" />
        <text x="173" y="887" fill="#0a8a0a">Y</text>
        <text x="211" y="935" fill="#e01b1b">X</text>
        <text x="153" y="944" fill="#1616e6">Z</text>
    </g>

/* ---------- data ---------- */

const menus = ['File', 'Edit', 'View', 'Insert', 'Tools', 'Window']

const quickTools = [
    { name: 'Home', icon: <House /> },
    { name: 'New', icon: <NewDoc />, menu: true },
    { name: 'Open', icon: <OpenDoc />, menu: true },
    { name: 'Save', icon: <Save />, menu: true },
    { name: 'Rebuild', icon: <Traffic /> },
    { name: 'Options', icon: <Svg><Gear x={18} y={18} r={17} /></Svg>, menu: true },
    { name: 'Undo', icon: <Undo />, menu: true },
    { name: 'Redo', icon: <Undo dim />, menu: true },
]

const ribbon = [
    { label: 'Edit\nComponent', w: 84, icon: <EditComp />, disabled: true },
    { label: 'Insert\nComponents', w: 89, icon: <InsertComp />, menu: true },
    { label: 'Mate', w: 50, icon: <Paperclip /> },
    { label: 'Component\nPreview\nWindow', w: 82, icon: <Preview />, disabled: true },
    { label: 'Linear\nComponent\nPattern', w: 84, icon: <Linear />, menu: true },
    { label: 'Smart\nFasteners', w: 68, icon: <Smart /> },
    { label: 'Move\nComponent', w: 84, icon: <Move />, menu: true, sep: true },
    { label: 'Show\nHidden\nComponents', w: 93, icon: <ShowHidden />, sep: true },
    { label: 'Assembly\nFeatures', w: 70, icon: <AsmFeatures />, menu: true },
    { label: 'Reference\nGeometry', w: 71, icon: <RefGeom />, menu: true, sep: true },
    { label: 'New\nMotion\nStudy', w: 59, icon: <Motion />, sep: true },
    { label: 'Bill of\nMaterials', w: 68, icon: <Bom />, sep: true },
    { label: 'Exploded\nView', w: 70, icon: <Exploded />, menu: true },
    { label: 'Instant3D', w: 71, icon: <Instant3D />, active: true },
    { label: 'Update\nSpeedpak', w: 75, icon: <Speedpak />, sep: true },
    { label: 'Take\nSnapshot', w: 68, icon: <Camera /> },
    { label: 'Large\nAssembly\nSettings', w: 67, icon: <Large /> },
]

const tabs = [['Assembly', 89], ['Layout', 63], ['Sketch', 62], ['Markup', 70], ['Evaluate', 74], ['SOLIDWORKS Add-Ins', 173], ['MBD', 56]]

const views = ['front', 'back', 'left', 'right', 'top', 'bottom']

const features = [
    { name: '3D Sketch', icon: <Sketch3D /> },
    { name: 'Weld Bead', icon: <Faded d="M4 26l17-6V5l6-3 7 3v21L14 35l-10-5z" inner="M18 22q2-9 8-8 5 2 5 9l-12 5zM1 3l9 8 2-3 2 8-8-1 2-3-8-6z" lines="M4 26l10 4 20-8M14 30v5M21 5l6 3 7-3M27 8v8" /> },
    { name: 'Hole Series', icon: <Faded d="M2 8q0-3 4-4l10-3 15 4q3 1 3 4v19q0 3-3 4l-16 3-11-5q-2-1-2-4z" inner="M15 14q0-3 3-3l11-2q2 0 2 3v14q0 2-2 2l-11 3q-3 0-3-3z" lines="M2 8l10 4q-1 1-1 4v18M12 12l20-5" /> },
    { name: 'Delete Body', icon: <Faded d="M3 6l20-5 11 5v12l-9 3v10l-9 4-12-5z" inner="M3 6l20-5v17l-8 5-12-5z" lines="M9 6l10 8M19 5l-9 10M14 4v12M23 9l11-3M3 18l12 5 10-3M15 23v12" /> },
    { name: 'Extrude', icon: <Faded d="M15 5l7-4 13 3v25l-8 5-12-5z" inner="M1 14l8-5 15 3v12l-8 5-15-4z" lines="M15 5l12 3 8-4M27 8v26M1 14l15 4 8-6M16 18v11" /> },
    { name: 'Shell', icon: <Faded d="M2 8q0-3 4-4l10-3 15 4q3 1 3 4v19q0 3-3 4l-16 3-11-5q-2-1-2-4z" inner="M15 14q0-2 2-2l12-2q2 0 2 2v14q0 2-2 2l-12 3q-2 0-2-2z" lines="M2 8l10 4q-1 1-1 4v18M12 12l20-5" /> },
    { name: 'Rib', icon: <Faded d="M4 26l20-6V4l3-3 5 2v22L10 35l-6-3z" inner="M10 26v-9L21 6l6-1v17l-13 7z" lines="M4 26l6 3 22-7M10 29v6M10 17l4 2 13-14" /> },
    { name: 'Fillet Bead', icon: <Faded d="M3 20l10-4V1l20 7v17L16 35 3 27z" inner="M9 17q4-3 7 2 4-3 7 2 4-2 7 2l-6 3-15-6z" lines="M3 20l13 7 17-8M16 27v8M13 1l-2 1v14" /> },
    { name: 'Cavity', icon: <Hollow /> },
    { name: 'Hole Wizard', icon: <Wizard /> },
    { name: 'Chamfer', icon: <Chamfer /> },
    { name: 'Reference Geometry', icon: <RefGeom />, menu: true },
]

const viewTools = [
    { name: 'Zoom to Fit', icon: <ZoomFit /> },
    { name: 'Zoom to Area', icon: <ZoomArea /> },
    { name: 'Previous View', icon: <PrevView /> },
    { name: 'Section View', icon: <Section /> },
    { name: 'Annotation Views', icon: <Annot /> },
    { name: 'View Orientation', icon: <Orient />, menu: true },
    { name: 'Display Style', icon: <Display />, menu: true },
    { name: 'Hide/Show Items', icon: <Eye />, menu: true },
    { name: 'Edit Appearance', icon: <Appear /> },
    { name: 'Apply Scene', icon: <Scene />, menu: true },
    { name: 'View Settings', icon: <Monitor />, menu: true },
]

const pane = [
    ['Resources', <House />],
    ['Design Library', <Books />],
    ['File Explorer', <Svg><Folder /></Svg>],
    ['View Palette', <Palette />],
    ['Appearances', <Svg><ellipse cx="18" cy="33" rx="14" ry="3" fill="#888" stroke="none" /><Ball /></Svg>],
    ['Custom Properties', <Props />],
]

const pager = ['M4 2v9M11 2v9L5 6.500z', 'M9 2v9L3 6.500z', 'M4 2v9l6-4.500z', 'M9 2v9M2 2v9l6-4.500z']

const apps = [
    ['Recorder', <Recorder />, 51], ['Lambda', <Dice />], ['CPU-Z', <CpuZ />], ['Remote', <RemoteApp />],
    ['Mouse', <Mouse />], ['NVIDIA', <Nvidia />], ['Drive', <Drive />], ['Teams', <Teams />],
    ['Word', <Office letter="W" dark="#185abd" mid="#2b7cd3" light="#41a5ee" />],
    ['Excel', <Office letter="X" dark="#107c41" mid="#21a366" light="#33c481" />],
    ['PowerPoint', <Office round letter="P" dark="#c43e1c" mid="#ed6c47" light="#ff8f6b" />],
    ['Messenger', <Messenger />], ['Chrome', <Chrome />, 51], ['Edge', <Edge />], ['EndNote', <Sigma />],
    ['LINE', <Line />], ['Dragon Center', <Dragon />], ['SOLIDWORKS', <SwApp />, 51], ['Explorer', <Explorer />, 51],
]

const Tool = ({ item, w = 46, h, slot = 20, color }) =>
    <>
        <Slot $w={w} $h={h} aria-label={item.name}>{item.icon}</Slot>
        {item.menu && <Slot $w={slot} $h={h} aria-label={`${item.name} menu`}><Arrow color={color} /></Slot>}
    </>

const App = () =>
    <Page>
        <GlobalStyle />
        <Defs />
        <TitleBar>
            <MenuArea>
                <Logo>
                    <Svg w={20} h={22} stroke="#da291c" strokeWidth="2"><path d="M4 1q9-1 9 3-1 4-7 6M1 20q2-10 7-8 4 3-1 7-2 2-6 1zM19 9q-6-1-6 3 0 2 3 4 1 4-5 4" /></Svg>
                    <span><b>SOLID</b>WORKS</span>
                </Logo>
                <MenuNav>
                    {menus.map(m => <button key={m}>{m}</button>)}
                    <Svg size={16} box={20} fill="#8a8c8f" stroke="#8a8c8f"><path d="M12 1l6 6-3 1-3 3v4L4 8l4-1 3-3z" /><path d="M8 11l-6 6" /></Svg>
                </MenuNav>
            </MenuArea>
            <QuickAccess>
                {quickTools.map(t => <Tool key={t.name} item={t} w={53} />)}
            </QuickAccess>
            <SearchBox>
                <Svg width="20" height="20" strokeWidth="2"><Folder /></Svg>
                <SearchInput placeholder="Search files and models" aria-label="Search files and models" />
                <Search color="#888" size={17} flip />
                <Arrow color="#777" />
            </SearchBox>
            <WindowButtons>
                <Slot $w={30} aria-label="Account"><Svg size={30} box={30} strokeWidth="1.500"><circle cx="15" cy="15" r="14" /><circle cx="15" cy="12" r="6.500" /><path d="M6 26q0-8 9-8t9 8" /></Svg></Slot>
                <Slot $w={91} aria-label="Help"><Svg size={30} box={30} strokeWidth="1.500"><circle cx="15" cy="15" r="14" /><path strokeWidth="3" d="M10.500 11.500Q11 7.500 15 7.500t4.500 4Q19 14 16.500 15T15 19M15 21v3" /></Svg></Slot>
                <Slot $w={32} aria-label="Minimize"><Minimize color="#3a3a3a" /></Slot>
                <Slot $w={90} aria-label="Restore"><Restore color="#3a3a3a" /></Slot>
                <Slot $w={32} aria-label="Close"><Close color="#3a3a3a" /></Slot>
            </WindowButtons>
        </TitleBar>
        <RecorderBar>
            <Svg size={14} box={14} fill="#e4e4e4" stroke="none"><path d="M0 3h14L7 11z" /></Svg>
            <Centered><Svg size={18} box={16} fill="#9cc6e8" stroke="#9cc6e8"><path d="M4 1l4 1v4l4 3-6 3-3-2 2-3-2-3z" /><path strokeWidth="2" d="M9 10l3 5" /></Svg></Centered>
            <span>1920x1080</span>
            <Centered>หน้าจอที่ 1</Centered>
            <RecDot><Svg size={18} box={18} fill="#e06a6e" stroke="none"><circle cx="9" cy="9" r="8" /></Svg></RecDot>
            <RecButton>REC</RecButton>
            <RecTool $on aria-label="Capture"><Svg size={20} box={20} stroke="#62a4e6" strokeWidth="2.500"><path d="M2 5h4l2-2h4l2 2h4v12H2z" /><circle cx="10" cy="11" r="3" /></Svg></RecTool>
            <RecTool $sep aria-label="Draw"><Svg size={18} box={18} fill="#eee" stroke="none"><path d="M12 1l5 4L7 15l-6 2 2-6z" /></Svg></RecTool>
            <RecTool aria-label="Close recorder"><Svg size={12} box={12} stroke="#c8c8ca"><path d="M0 0l12 12M12 0 0 12" /></Svg></RecTool>
        </RecorderBar>

        <Ribbon>
            {ribbon.map(item => (
                <RibbonItem key={item.label} $w={item.w} $menu={item.menu} $sep={item.sep} $active={item.active} disabled={item.disabled}>
                    {item.icon}
                    <RibbonLabel>{item.label}</RibbonLabel>
                    {item.menu && <RibbonArrow><Arrow /></RibbonArrow>}
                </RibbonItem>
            ))}
        </Ribbon>

        <Body>
            <Tabs>
                {tabs.map(([label, w], i) => <Tab key={label} $w={w} $active={i === 0}>{label}</Tab>)}
            </Tabs>
            <Side>
                <ToolColumn>
                    <Grip />
                    <Slot $w={46} $h={46} aria-label="Normal To"><NormalTo /></Slot>
                    <Rule />
                    {views.map(v => <Slot key={v} $w={46} $h={46} aria-label={v}><Wire face={v} /></Slot>)}
                    <Slot $w={46} $h={46} aria-label="Isometric"><Solid d="M4 10l14-8 14 8v16l-14 9-14-9z" edges="M4 10l14 8 14-8M18 18v17" /></Slot>
                    <Slot $w={47} $h={46} $active aria-label="Trimetric"><Solid d="M2 9 16 3l18 5v20l-12 7L2 29z" edges="M2 9l20 5 12-6M22 14v21" /></Slot>
                    <Slot $w={46} $h={46} aria-label="Dimetric"><Solid d="M2 7l8-5 25 2v24l-8 7-25-2z" edges="M2 7l25 2 8-5M27 9v26" /></Slot>
                    <Rule />
                    <Slot $w={46} $h={46} aria-label="View"><Svg><Barrel /></Svg></Slot>
                </ToolColumn>
                <ToolColumn $wide>
                    <Grip $wide />
                    {features.map(f => (
                        <ToolRow key={f.name}>
                            <Slot $w={46} $h={46} aria-label={f.name}>{f.icon}</Slot>
                            {f.menu && <RowArrow aria-label="More"><Arrow /></RowArrow>}
                        </ToolRow>
                    ))}
                </ToolColumn>
            </Side>
            <Viewport>
                <Canvas>
                    <Drawing viewBox="125 202 1795 786">
                        <g transform="translate(540 370) scale(.33333)">
                            <Louver />
                            <Housing />
                            <Fan />
                        </g>
                        <g transform="translate(1130 500) scale(.33333)">
                            <Motor />
                            <Pulley />
                            <Belt />
                            <Grill />
                        </g>
                        <Triad />
                    </Drawing>
                    <ViewBar>
                        {viewTools.map(t => <Tool key={t.name} item={t} h={46} color="#8c8c8c" />)}
                    </ViewBar>
                    <DocButtons>
                        <Slot $w={46} $h={46} aria-label="Dock left"><DockIcon /></Slot>
                        <Slot $w={46} $h={46} aria-label="Dock right"><DockIcon right /></Slot>
                        <Slot $w={46} $h={46} aria-label="Minimize document"><Minimize color="#a6a6a6" /></Slot>
                        <Slot $w={46} $h={46} aria-label="Restore document"><Restore color="#a6a6a6" /></Slot>
                        <Slot $w={46} $h={46} aria-label="Close document"><Close color="#a6a6a6" bold={2} /></Slot>
                    </DocButtons>
                    <TaskPane>
                        {pane.map(([name, icon], i) => <PaneButton key={name} aria-label={name} $active={i === 4}>{icon}</PaneButton>)}
                    </TaskPane>
                    <Handle aria-label="Expand panel"><Svg size={6} box={6} stroke="#808184"><circle cx="3" cy="3" r="2" /></Svg></Handle>
                    <ViewName>*Trimetric</ViewName>
                </Canvas>
                <BottomTabs>
                    <Pager>
                        {pager.map(d => <PagerButton key={d} aria-label="Scroll tabs"><Svg size={13} box={13} fill="#85879f" stroke="#85879f"><path d={d} /></Svg></PagerButton>)}
                    </Pager>
                    <SheetTab $w={77} $active>Model</SheetTab>
                    <SheetTab $w={89}>3D Views</SheetTab>
                    <SheetTab $w={144}>Motion Study 1</SheetTab>
                </BottomTabs>
            </Viewport>
        </Body>

        <StatusBar>
            <span>SOLIDWORKS Premium 2020 SP3.0</span>
            <StatusText $push $w={115}>Under Defined</StatusText>
            <StatusText $w={130}>Editing Assembly</StatusText>
            <StatusIcon $w={23} $sep><Traffic size={15} /></StatusIcon>
            <StatusIcon $w={102} $start>
                <Svg size={16} box={16}><path fill="#fbd22b" stroke="#b04c00" d="M5 1l5 9H0z" /><path strokeWidth="2" d="M2 14h2M6 14h2M10 14h2M10 10q4-1 3-6M11 5l2-3 2 3" /></Svg>
            </StatusIcon>
            <StatusText $w={65}>MMGS</StatusText>
            <StatusIcon $w={14}><svg width="6" height="4" fill="#333"><path d="M0 4h6L3 0z" /></svg></StatusIcon>
            <StatusIcon $w={38}><Svg size={16} box={16} transform="translate(10 -2)"><path fill="#eee" d="M1 3l10-2 4 8-6 6z" /><path d="M4 5l5 6M8 3l4 6" /></Svg></StatusIcon>
        </StatusBar>

        <TaskBar>
            <SystemButtons>
                <TaskButton $w={60} aria-label="Start"><Start /></TaskButton>
                <TaskButton $w={60} aria-label="Search"><Search /></TaskButton>
                <TaskButton $w={60} aria-label="Task View"><TaskView /></TaskButton>
            </SystemButtons>
            {apps.map(([name, icon, open]) => <TaskButton key={name} $open={open} aria-label={name}>{icon}</TaskButton>)}
            <Tray>
                <TrayItem $w={34} aria-label="Weather"><Weather /></TrayItem>
                <Temperature $w={60}>25°C</Temperature>
                <TrayItem $w={30} aria-label="Hidden icons"><Svg w={16} h={10} stroke="#fff" strokeWidth="1.600"><path d="M1 9l7-7 7 7" /></Svg></TrayItem>
                <TrayItem $w={30} aria-label="Dragon Center"><Dragon size={20} /></TrayItem>
                <TrayItem $w={30} aria-label="Volume"><Svg size={20} box={20} stroke="#eee"><path d="M1 7h3l4-4v14l-4-4H1z" /><path d="M11 8q1 2 0 4" /><path stroke="#777" d="M14 5q3 5 0 10M17 3q4 7 0 14" /></Svg></TrayItem>
                <TrayItem $w={30} aria-label="Network"><Svg size={18} box={18} stroke="#ccc"><path d="M1 16Q2 2 16 2M5 17Q6 6 16 6M9 17q1-7 7-7M13 17q0-3 3-3" /><circle cx="15" cy="16" r="1" fill="#fff" /></Svg></TrayItem>
                <TrayItem $w={30} aria-label="Battery"><Svg w={20} h={16} stroke="#fff"><path d="M5 5h13v9H3V9M1 1v3q0 2 2 2t2-2V1M3 6v3M19 8v3" /><path fill="#fff" d="M7 7h9v5H7z" /></Svg></TrayItem>
                <TrayItem $w={46}>ไทย</TrayItem>
                <TrayItem $w={84}>{'0:48\n24/3/2565'}</TrayItem>
                <TrayItem $w={50} aria-label="Notifications"><Svg size={22} box={22} stroke="#fff" strokeWidth="1.500"><path d="M1 2h20v15h-7l-3 4-3-4H1z" /></Svg></TrayItem>
            </Tray>
        </TaskBar>
    </Page>

export default App
